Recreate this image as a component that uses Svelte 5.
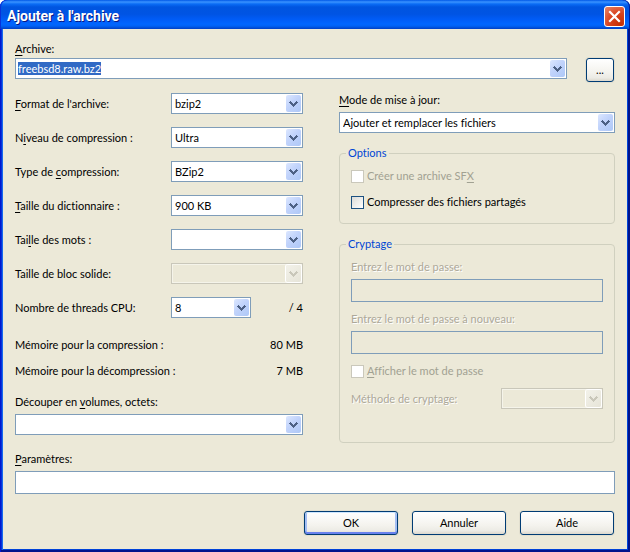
<script>
  import { onMount } from 'svelte';

  let archive = $state('freebsd8.raw.bz2');
  let format = $state('bzip2');
  let level = $state('Ultra');
  let method = $state('BZip2');
  let dictionary = $state('900 KB');
  let word = $state('');
  let threads = $state('8');
  let volumes = $state('');
  let parameters = $state('');
  let updateMode = $state('Ajouter et remplacer les fichiers');
  let shared = $state(false);
  let archiveInput;

  onMount(() => {
    archiveInput.focus();
    archiveInput.select();
  });
</script>

{#snippet arrow()}
  <svg class="chevron" width="9" height="6" viewBox="0 0 9 6" shape-rendering="crispEdges" aria-hidden="true">
    <path d="M1 0h1v1h1v1h1v1h1v-1h1v-1h1v-1h1v1h1v1h-1v1h-1v1h-1v1h-1v1h-1v-1h-1v-1h-1v-1h-1v-1h-1v-1h1z" fill="currentColor" />
  </svg>
{/snippet}

<main class="window">
  <header class="titlebar">
    <h1>Ajouter à l'archive</h1>
    <button class="close" type="button" aria-label="Fermer">
      <svg width="19" height="19" viewBox="0 0 19 19" aria-hidden="true">
        <path d="M5 5l9 9M14 5l-9 9" stroke="#fff" stroke-width="2.2" stroke-linecap="square" />
      </svg>
    </button>
  </header>

  <form class="body" onsubmit={(e) => e.preventDefault()}>
    <label for="archive"><u>A</u>rchive:</label>
    <div class="archive-row">
      <div class="combo">
        <input id="archive" type="text" bind:value={archive} bind:this={archiveInput} />
        <button class="drop" type="button" aria-label="Archives récentes">{@render arrow()}</button>
      </div>
      <button class="push browse" type="button">...</button>
    </div>

    <div class="columns">
      <div class="left">
        <div class="field">
          <label for="format"><u>F</u>ormat de l'archive:</label>
          <div class="combo">
            <select id="format" bind:value={format}><option>bzip2</option></select>
            <span class="drop">{@render arrow()}</span>
          </div>
        </div>
        <div class="field">
          <label for="level">N<u>i</u>veau de compression :</label>
          <div class="combo">
            <select id="level" bind:value={level}><option>Ultra</option></select>
            <span class="drop">{@render arrow()}</span>
          </div>
        </div>
        <div class="field">
          <label for="method">Type de <u>c</u>ompression:</label>
          <div class="combo">
            <select id="method" bind:value={method}><option>BZip2</option></select>
            <span class="drop">{@render arrow()}</span>
          </div>
        </div>
        <div class="field">
          <label for="dictionary"><u>T</u>aille du dictionnaire :</label>
          <div class="combo">
            <select id="dictionary" bind:value={dictionary}><option>900 KB</option></select>
            <span class="drop">{@render arrow()}</span>
          </div>
        </div>
        <div class="field">
          <label for="word">Tai<u>l</u>le des mots :</label>
          <div class="combo">
            <select id="word" bind:value={word}><option value=""></option></select>
            <span class="drop">{@render arrow()}</span>
          </div>
        </div>
        <div class="field">
          <label for="block">Taille de bloc solide:</label>
          <div class="combo disabled">
            <select id="block" disabled><option value=""></option></select>
            <span class="drop">{@render arrow()}</span>
          </div>
        </div>
        <div class="field">
          <label for="threads">Nombre de threads CPU:</label>
          <div class="threads">
            <div class="combo">
              <select id="threads" bind:value={threads}><option>8</option></select>
              <span class="drop">{@render arrow()}</span>
            </div>
            <span>/ 4</span>
          </div>
        </div>

        <div class="memory">
          <div><span>Mémoire pour la compression :</span><span>80 MB</span></div>
          <div><span>Mémoire pour la décompression :</span><span>7 MB</span></div>
        </div>

        <div class="stack">
          <label for="volumes">Découper en <u>v</u>olumes, octets:</label>
          <div class="combo">
            <input id="volumes" type="text" bind:value={volumes} />
            <button class="drop" type="button" aria-label="Tailles de volume">{@render arrow()}</button>
          </div>
        </div>
      </div>

      <div class="right">
        <div class="stack">
          <label for="mode"><u>M</u>ode de mise à jour:</label>
          <div class="combo">
            <select id="mode" bind:value={updateMode}><option>Ajouter et remplacer les fichiers</option></select>
            <span class="drop">{@render arrow()}</span>
          </div>
        </div>

        <fieldset class="options">
          <legend>Options</legend>
          <label class="check off"><input type="checkbox" disabled /><span>Créer une archive SF<u>X</u></span></label>
          <label class="check"><input type="checkbox" bind:checked={shared} /><span>Compresser des fichiers partagés</span></label>
        </fieldset>

        <fieldset class="crypt">
          <legend>Cryptage</legend>
          <div class="stack">
            <label class="etched" for="password">Entrez le mot de passe:</label>
            <input class="text" id="password" type="password" disabled />
          </div>
          <div class="stack">
            <label class="etched" for="password2">Entrez le mot de passe à nouveau:</label>
            <input class="text" id="password2" type="password" disabled />
          </div>
          <label class="check off"><input type="checkbox" disabled /><span><u>A</u>fficher le mot de passe</span></label>
          <div class="cipher">
            <label class="etched" for="cipher">Méthode de cryptage:</label>
            <div class="combo disabled">
              <select id="cipher" disabled><option value=""></option></select>
              <span class="drop">{@render arrow()}</span>
            </div>
          </div>
        </fieldset>
      </div>
    </div>

    <div class="stack parameters">
      <label for="parameters"><u>P</u>aramètres:</label>
      <input class="text" id="parameters" type="text" bind:value={parameters} />
    </div>

    <div class="actions">
      <button class="push default" type="submit">OK</button>
      <button class="push" type="button">Annuler</button>
      <button class="push" type="button">Aide</button>
    </div>
  </form>
</main>

<style>
  :global(body) {
    margin: 0;
    background: #fff;
  }

  .window,
  .window * {
    box-sizing: border-box;
  }

  .window {
    display: flex;
    flex-direction: column;
    padding: 0 3px 3px;
    border-radius: 7px 7px 0 0;
    background: #0043d8;
    box-shadow:
      inset 1px 0 #0019cf,
      inset -2px -2px #00138c,
      inset 2px 0 #0831d9,
      inset 3px 0 #166aee;
    font: 11px/16px Lato, "Liberation Sans", sans-serif;
    font-variant-ligatures: none;
    color: #000;
  }

  .titlebar {
    display: flex;
    align-items: center;
    justify-content: space-between;
    height: 29px;
    margin: 0 -3px;
    padding: 3px 5px 0 7px;
    border-radius: 7px 7px 0 0;
    background: linear-gradient(#0058e6 0, #3a93ff 2px, #0a6cf5 4px, #0055e0 7px, #0054e3 14px, #005bf5 19px, #0066ff 24px, #0062f5 26px, #0040c4 29px);
    box-shadow: inset 1px 0 #0831d9, inset -1px 0 #001ca0;
  }

  h1 {
    margin: 0;
    font: bold 14px/20px Roboto, "Noto Sans", sans-serif;
    color: #fff;
    text-shadow: 1px 1px #0a1883;
  }

  button,
  input,
  select {
    margin: 0;
    padding: 0;
    border: 0;
    border-radius: 0;
    outline: 0;
    appearance: none;
    font: inherit;
    font-variant-ligatures: none;
    color: inherit;
    background: none;
  }

  .close {
    width: 21px;
    height: 21px;
    border: 1px solid #fff;
    border-radius: 3px;
    background: radial-gradient(circle at 80% 90%, #c62f04, #da4420 50%, #e6886a 100%);
  }

  .close svg {
    display: block;
  }

  .body {
    padding: 12px 12px 14px;
    background: #ece9d8;
  }

  label {
    display: block;
  }

  u {
    text-underline-offset: 2px;
    text-decoration-skip-ink: none;
  }

  .archive-row {
    display: flex;
    gap: 19px;
    align-items: flex-start;
    margin-top: 1px;
  }

  .archive-row .combo {
    flex: 1;
  }

  .combo {
    position: relative;
    display: flex;
    align-items: center;
    height: 21px;
    padding: 0 1px 0 2px;
    border: 1px solid #7f9db9;
    background: #fff;
  }

  .combo input {
    flex: 1;
    min-width: 0;
    height: 13px;
    line-height: 13px;
  }

  .combo input::selection {
    color: #fff;
    background: #316ac5;
  }

  .combo select {
    flex: 1;
    min-width: 0;
    height: 19px;
    padding: 1px 0 0 1px;
    line-height: 18px;
  }

  .drop {
    display: grid;
    place-items: center;
    width: 15px;
    height: 17px;
    border-radius: 2px;
    color: #4d6185;
    background: linear-gradient(135deg, #dce7ff, #c1d3fb 45%, #aec8f7);
  }

  /* The arrow of a list lies over the select, so a click on it still opens the list. */
  select + .drop {
    position: absolute;
    top: 1px;
    right: 1px;
    pointer-events: none;
  }

  .combo.disabled {
    border-color: #c9c7ba;
    background: #ece9d8;
    box-shadow: inset 0 0 0 1px #f5f4ea;
  }

  .disabled .drop {
    color: #c9c7ba;
    background: linear-gradient(135deg, #f3f2ea, #e6e4d8);
    box-shadow: 0 0 0 1px #fff;
  }

  .text {
    display: block;
    width: 100%;
    height: 23px;
    padding: 0 3px;
    border: 1px solid #7f9db9;
    background: #fff;
  }

  .text:disabled {
    background: #ece9d8;
  }

  .columns {
    display: grid;
    grid-template-columns: 24fr 23fr;
    gap: 36px;
    margin-top: 10px;
  }

  .left {
    display: flex;
    flex-direction: column;
    gap: 13px;
    padding-top: 1px;
  }

  .field {
    display: grid;
    grid-template-columns: 13fr 11fr;
    align-items: center;
  }

  .threads {
    display: flex;
    align-items: center;
    justify-content: space-between;
  }

  .threads .combo {
    width: 80px;
  }

  .memory {
    display: flex;
    flex-direction: column;
    gap: 10px;
    padding: 6px 0 2px;
  }

  .memory div {
    display: flex;
    justify-content: space-between;
  }

  .stack {
    display: flex;
    flex-direction: column;
    gap: 4px;
  }

  fieldset {
    display: flex;
    flex-direction: column;
    gap: 10px;
    min-width: 0;
    margin: 12px 0 0;
    padding: 7px 11px 13px;
    border: 1px solid #d0d0bf;
    border-radius: 4px;
  }

  .crypt {
    gap: 9px;
    padding-bottom: 33px;
  }

  legend {
    margin-left: -5px;
    padding: 0 2px;
    color: #0046d5;
  }

  .check {
    display: flex;
    align-items: center;
    gap: 3px;
  }

  .check input {
    width: 13px;
    height: 13px;
    border: 1px solid #1c5180;
    background: linear-gradient(135deg, #dcdcd7, #fff);
  }

  .check input:checked {
    background: #21a121;
    box-shadow: inset 0 0 0 2px #fff;
  }

  .off {
    color: #a1a192;
  }

  .check.off input {
    border-color: #cac8bb;
    background: #fff;
  }

  .etched {
    color: #aca899;
    text-shadow: 1px 1px #fff;
  }

  .cipher {
    display: flex;
    align-items: center;
    justify-content: space-between;
  }

  .cipher .combo {
    width: 102px;
  }

  .parameters {
    margin-top: 8px;
  }

  .actions {
    display: flex;
    justify-content: flex-end;
    gap: 14px;
    margin: 17px 1px 0;
  }

  .push {
    width: 94px;
    height: 24px;
    border: 1px solid #003c74;
    border-radius: 3px;
    background: linear-gradient(#fff, #f4f3ee 60%, #ecebe5 85%, #dcd8cd);
    box-shadow: 0 0 0 1px #e2dfcf;
  }

  .default {
    box-shadow:
      0 0 0 1px #e2dfcf,
      inset 0 1px #cee7ff,
      inset 0 -2px #6982ee,
      inset 2px 0 #a5bff3,
      inset -2px 0 #a5bff3;
  }

  .browse {
    width: 28px;
    margin-right: 1px;
  }
</style>
